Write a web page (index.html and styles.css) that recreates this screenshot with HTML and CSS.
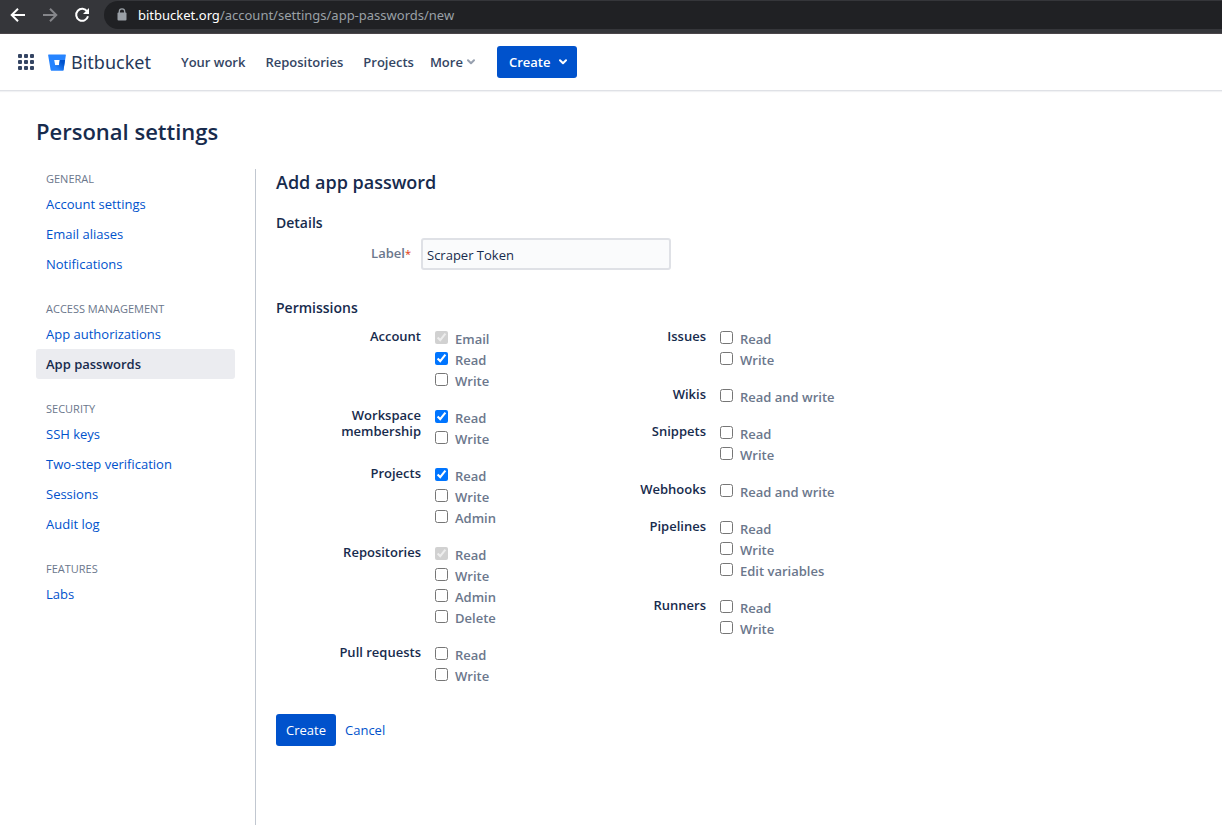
FILE: index.html
```html
<!DOCTYPE html>
<html lang="en">
<head>
<meta charset="utf-8">
<title>Add app password</title>
<link rel="stylesheet" href="styles.css">
</head>
<body>
<div class="browser">
  <button class="nav-btn" aria-label="Back"><svg width="16" height="16" viewBox="0 0 16 16"><path d="M15 8H2M8 1.700L1.700 8L8 14.300" fill="none" stroke="#fff" stroke-width="2"/></svg></button>
  <button class="nav-btn" aria-label="Forward"><svg width="16" height="16" viewBox="0 0 16 16"><path d="M1 8H14M8 1.700L14.300 8L8 14.300" fill="none" stroke="#85868a" stroke-width="2"/></svg></button>
  <button class="nav-btn" aria-label="Reload"><svg width="16" height="16" viewBox="0 0 16 16"><path d="M13.200 4.500A6 6 0 1 0 14 9.300" fill="none" stroke="#fff" stroke-width="2"/><path d="M15 1V7H9z" fill="#fff"/></svg></button>
  <div class="address">
    <svg width="10" height="13" viewBox="0 0 10 13"><path d="M2.300 5V3.500a2.700 2.700 0 0 1 5.400 0V5" fill="none" stroke="#9aa0a6" stroke-width="1.300"/><rect x="0.500" y="4.500" width="9" height="8" rx="1" fill="#9aa0a6"/></svg>
    <span class="url"><b>bitbucket.org</b>/account/settings/app-passwords/new</span>
  </div>
</div>
<header class="topbar">
  <button class="switcher" aria-label="Switch to"><svg width="16" height="16" viewBox="0 0 16 16" fill="#344563"><rect width="4" height="4" rx="1"/><rect x="6" width="4" height="4" rx="1"/><rect x="12" width="4" height="4" rx="1"/><rect y="6" width="4" height="4" rx="1"/><rect x="6" y="6" width="4" height="4" rx="1"/><rect x="12" y="6" width="4" height="4" rx="1"/><rect y="12" width="4" height="4" rx="1"/><rect x="6" y="12" width="4" height="4" rx="1"/><rect x="12" y="12" width="4" height="4" rx="1"/></svg></button>
  <a class="brand" href="#">
    <svg width="18" height="17" viewBox="0 0 18 17"><defs><linearGradient id="g" x1="1" y1="0.200" x2="0.400" y2="0.800"><stop offset="0.200" stop-color="#0052cc"/><stop offset="1" stop-color="#2684ff"/></linearGradient></defs><path d="M0.600 0.500H17.400a.5.5 0 0 1 .5.600L15.500 15.900a.7.700 0 0 1-.7.600H3.400a.8.800 0 0 1-.8-.7L.1 1.100A.5.500 0 0 1 .6.500zM7.200 11.200H10.900L11.800 6H6.200z" fill="#2684ff" fill-rule="evenodd"/><path d="M17.100 6H11.800L10.900 11.200H7.200L2.900 16.300q.2.200.5.200H14.800a.7.700 0 0 0 .7-.6z" fill="url(#g)"/></svg>
    <span>Bitbucket</span>
  </a>
  <nav class="links">
    <a href="#">Your work</a><a href="#">Repositories</a><a href="#">Projects</a>
  </nav>
  <button class="more">More <svg width="8" height="6" viewBox="0 0 8 6"><path d="M1 1.200L4 4.200L7 1.200" fill="none" stroke="#97a0af" stroke-width="2" stroke-linecap="round" stroke-linejoin="round"/></svg></button>
  <button class="create-menu">Create <svg width="8" height="6" viewBox="0 0 8 6"><path d="M1 1.200L4 4.200L7 1.200" fill="none" stroke="#fff" stroke-width="2" stroke-linecap="round" stroke-linejoin="round"/></svg></button>
</header>
<div class="page">
  <h1>Personal settings</h1>
  <div class="body">
    <nav class="sidebar">
      <section><h2>GENERAL</h2><a href="#">Account settings</a><a href="#">Email aliases</a><a href="#">Notifications</a></section>
      <section><h2>ACCESS MANAGEMENT</h2><a href="#">App authorizations</a><a class="current" href="#">App passwords</a></section>
      <section><h2>SECURITY</h2><a href="#">SSH keys</a><a href="#">Two-step verification</a><a href="#">Sessions</a><a href="#">Audit log</a></section>
      <section><h2>FEATURES</h2><a href="#">Labs</a></section>
    </nav>
    <form class="content">
      <h2>Add app password</h2>
      <h3>Details</h3>
      <div class="field"><label for="name">Label<span class="required">*</span></label><input id="name" type="text" value="Scraper Token"></div>
      <h3>Permissions</h3>
      <div class="columns">
        <div class="column">
          <fieldset><legend>Account</legend><div class="options">
            <label><input type="checkbox" checked disabled>Email</label>
            <label><input type="checkbox" checked>Read</label>
            <label><input type="checkbox">Write</label></div></fieldset>
          <fieldset><legend>Workspace membership</legend><div class="options">
            <label><input type="checkbox" checked>Read</label>
            <label><input type="checkbox">Write</label></div></fieldset>
          <fieldset><legend>Projects</legend><div class="options">
            <label><input type="checkbox" checked>Read</label>
            <label><input type="checkbox">Write</label>
            <label><input type="checkbox">Admin</label></div></fieldset>
          <fieldset><legend>Repositories</legend><div class="options">
            <label><input type="checkbox" checked disabled>Read</label>
            <label><input type="checkbox">Write</label>
            <label><input type="checkbox">Admin</label>
            <label><input type="checkbox">Delete</label></div></fieldset>
          <fieldset><legend>Pull requests</legend><div class="options">
            <label><input type="checkbox">Read</label>
            <label><input type="checkbox">Write</label></div></fieldset>
        </div>
        <div class="column">
          <fieldset><legend>Issues</legend><div class="options">
            <label><input type="checkbox">Read</label>
            <label><input type="checkbox">Write</label></div></fieldset>
          <fieldset><legend>Wikis</legend><div class="options">
            <label><input type="checkbox">Read and write</label></div></fieldset>
          <fieldset><legend>Snippets</legend><div class="options">
            <label><input type="checkbox">Read</label>
            <label><input type="checkbox">Write</label></div></fieldset>
          <fieldset><legend>Webhooks</legend><div class="options">
            <label><input type="checkbox">Read and write</label></div></fieldset>
          <fieldset><legend>Pipelines</legend><div class="options">
            <label><input type="checkbox">Read</label>
            <label><input type="checkbox">Write</label>
            <label><input type="checkbox">Edit variables</label></div></fieldset>
          <fieldset><legend>Runners</legend><div class="options">
            <label><input type="checkbox">Read</label>
            <label><input type="checkbox">Write</label></div></fieldset>
        </div>
      </div>
      <div class="actions"><button class="submit" type="button">Create</button><a href="#">Cancel</a></div>
    </form>
  </div>
</div>
</body>
</html>
```

FILE: styles.css
```css
* { box-sizing: border-box; }
body {
  margin: 0;
  min-height: 100vh;
  display: flex;
  flex-direction: column;
  background: #fff;
  color: #172b4d;
  font: 13px/20px "Open Sans", "Noto Sans", sans-serif;
}
button { font: inherit; border: 0; padding: 0; background: none; }
a { color: #0052cc; text-decoration: none; }
svg { display: block; flex: none; }
h1, h2, h3 { margin: 0; font-weight: 600; }

.browser {
  display: flex;
  align-items: center;
  gap: 16px;
  height: 34px;
  padding: 0 0 4px 10px;
  background: #35363a;
  border-bottom: 1px solid #4a4549;
}
.address {
  flex: 1;
  display: flex;
  align-items: center;
  gap: 11px;
  height: 28px;
  margin-left: -2px;
  padding-left: 13px;
  border-radius: 14px 0 0 14px;
  background: #202124;
  color: #9aa0a6;
  font-family: "Noto Sans", sans-serif;
}
.url b { color: #fff; font-weight: 400; }

.topbar {
  display: flex;
  align-items: center;
  height: 57px;
  padding: 0 18px;
  border-bottom: 1px solid #dfe1e6;
  box-shadow: 0 1px 1px #f1f2f4;
  color: #344563;
  font-weight: 600;
}
.brand {
  display: flex;
  align-items: center;
  gap: 5px;
  margin: 0 30px 0 14px;
  color: #253858;
  font: 400 18px/24px "Noto Sans", sans-serif;
}
.links { display: flex; gap: 20px; margin-right: 16px; }
.links a { color: #344563; }
.more { display: flex; align-items: center; gap: 4px; margin-right: 22px; color: #344563; font-weight: 600; }
.create-menu {
  display: flex;
  align-items: center;
  justify-content: space-between;
  width: 80px;
  height: 32px;
  padding: 0 10px 0 12px;
  border-radius: 3px;
  background: #0052cc;
  color: #fff;
  font-weight: 600;
}

.page { flex: 1; display: flex; flex-direction: column; padding: 27px 36px 0; }
h1 { margin-bottom: 25px; font-size: 22px; line-height: 26px; }
.body { flex: 1; display: flex; }
.sidebar { width: 220px; padding-right: 20px; border-right: 1px solid #c1c7d0; }
.sidebar section { margin-bottom: 20px; }
.sidebar h2 { padding-left: 10px; color: #6b778c; font-size: 11px; font-weight: 400; line-height: 20px; }
.sidebar a { display: block; padding: 5px 10px; border-radius: 3px; }
.sidebar .current { background: #ebecf0; color: #172b4d; font-weight: 600; }

.content { flex: 1; padding-left: 20px; }
.content h2 { margin-bottom: 18px; font-size: 18px; line-height: 26px; }
.content h3 { font-size: 14px; line-height: 20px; }
.field { display: flex; margin: 5px 0 28px; }
.field label { width: 135px; margin-right: 10px; padding-top: 5px; text-align: right; color: #6b778c; line-height: 20px; font-weight: 600; }
.required { color: #de350b; font-size: 11px; font-weight: 400; }
.field input {
  width: 250px;
  height: 32px;
  padding: 4px 4px 2px;
  border: 2px solid #dfe1e6;
  border-radius: 3px;
  background: #fafbfc;
  color: #172b4d;
  font: inherit;
}
.columns { display: flex; margin-top: 8px; }
.column { width: 285px; }
fieldset { display: flex; margin: 0 0 16px; padding: 0; border: 0; min-width: 0; }
legend { float: left; width: 145px; margin-right: 14px; padding: 2px 0 0 45px; text-align: right; line-height: 16px; font-weight: 600; }
.options { flex: 1; }
.options label { display: flex; align-items: flex-start; gap: 7px; height: 21px; padding-top: 4px; color: #6b778c; line-height: 18px; font-weight: 600; white-space: nowrap; }
.options input { width: 13px; height: 13px; margin: 1px 0 0; }
.actions { display: flex; align-items: center; gap: 9px; margin-top: 14px; }
.submit { width: 60px; height: 32px; border-radius: 3px; background: #0052cc; color: #fff; }
```
